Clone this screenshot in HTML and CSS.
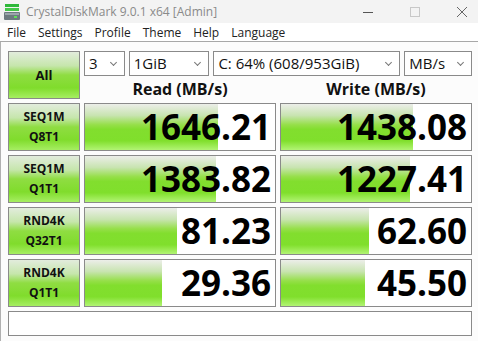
FILE: index.html
```html
<!DOCTYPE html>
<html lang="en">
<head>
  <meta charset="UTF-8">
  <title>CrystalDiskMark 9.0.1 x64 [Admin]</title>
  <link rel="stylesheet" href="styles.css">
</head>
<body>
  <div class="titlebar">
    <svg class="app-icon" width="16" height="16" viewBox="0 0 16 16">
      <rect x="1" y="0" width="14" height="3" fill="#2fb83a"/>
      <rect x="1" y="4" width="14" height="3" fill="#45c84a"/>
      <rect x="0" y="8" width="16" height="8" rx="1" fill="#6d7a80"/>
      <rect x="1" y="9" width="14" height="2" fill="#9aa6ab"/>
      <rect x="10" y="12" width="3" height="2" fill="#5ee05a"/>
    </svg>
    <span class="title">CrystalDiskMark 9.0.1 x64 [Admin]</span>
    <div class="controls">
      <svg width="12" height="12" viewBox="0 0 12 12"><path d="M1 6.5h10" stroke="#555" stroke-width="1"/></svg>
      <svg width="12" height="12" viewBox="0 0 12 12"><rect x="1.5" y="1.5" width="9" height="9" fill="none" stroke="#c8c8c8" stroke-width="1"/></svg>
      <svg width="12" height="12" viewBox="0 0 12 12"><path d="M1 1l10 10M11 1L1 11" stroke="#666" stroke-width="1"/></svg>
    </div>
  </div>

  <div class="menubar">
    <span>File</span>
    <span>Settings</span>
    <span>Profile</span>
    <span>Theme</span>
    <span>Help</span>
    <span>Language</span>
  </div>

  <div class="main">
    <div class="panel">
      <div class="btn all">All</div>

      <div class="combos">
        <div class="combo c-count">3</div>
        <div class="combo c-size">1GiB</div>
        <div class="combo c-drive">C: 64% (608/953GiB)</div>
        <div class="combo c-unit">MB/s</div>
      </div>

      <div class="head">Read (MB/s)</div>
      <div class="head">Write (MB/s)</div>

      <div class="btn">SEQ1M<br>Q8T1</div>
      <div class="cell"><div class="bar" style="width:70%"></div><span class="num">1646.21</span></div>
      <div class="cell"><div class="bar" style="width:69.5%"></div><span class="num">1438.08</span></div>

      <div class="btn">SEQ1M<br>Q1T1</div>
      <div class="cell"><div class="bar" style="width:69%"></div><span class="num">1383.82</span></div>
      <div class="cell"><div class="bar" style="width:68%"></div><span class="num">1227.41</span></div>

      <div class="btn">RND4K<br>Q32T1</div>
      <div class="cell"><div class="bar" style="width:48.4%"></div><span class="num">81.23</span></div>
      <div class="cell"><div class="bar" style="width:46.3%"></div><span class="num">62.60</span></div>

      <div class="btn">RND4K<br>Q1T1</div>
      <div class="cell"><div class="bar" style="width:40.5%"></div><span class="num">29.36</span></div>
      <div class="cell"><div class="bar" style="width:44.2%"></div><span class="num">45.50</span></div>

      <div class="status"></div>
    </div>
  </div>
</body>
</html>
```

FILE: styles.css
```css
html, body {
  margin: 0;
  padding: 0;
}
body {
  width: 478px;
  height: 341px;
  overflow: hidden;
  font-family: "Open Sans", "Noto Sans", sans-serif;
  background: #fcfcfc;
}

.titlebar {
  height: 23px;
  background: #f3f3f3;
  display: flex;
  align-items: center;
  padding-left: 4px;
}
.app-icon {
  flex: none;
}
.title {
  margin-left: 6px;
  font-size: 12px;
  color: #8a8a8a;
}
.controls {
  margin-left: auto;
  display: flex;
  gap: 35px;
  padding-right: 10px;
}

.menubar {
  height: 18px;
  background: #fff;
  border-bottom: 1px solid #a8a8a8;
  display: flex;
  align-items: center;
  font-size: 12px;
  color: #222;
  padding-left: 1px;
}
.menubar span {
  padding: 0 6px;
}

.main {
  border-left: 1px solid #b0b0b0;
  padding: 9px 0 0 7px;
  height: 290px;
}
.panel {
  display: grid;
  grid-template-columns: 72px 192px 192px;
  grid-template-rows: 25px 19px repeat(4, 48px) 25px;
  gap: 4px;
}

.btn {
  box-sizing: border-box;
  border: 1px solid #8a8a8a;
  background: linear-gradient(to bottom, #e2ecdc 0%, #c6e6ac 30%, #8fdd42 50%, #80dc2c 78%, #a6ee62 100%);
  display: flex;
  align-items: center;
  justify-content: center;
  text-align: center;
  font-weight: bold;
  font-size: 12px;
  line-height: 20px;
  color: #111;
}
.all {
  grid-row: 1 / 3;
  font-size: 13px;
}

.combos {
  grid-column: 2 / 4;
  display: flex;
  gap: 4px;
}
.combo {
  box-sizing: border-box;
  height: 25px;
  border: 1px solid #8a8a8a;
  background: #fff;
  font-size: 15px;
  line-height: 23px;
  padding-left: 4px;
  color: #111;
  position: relative;
}
.combo::after {
  content: "";
  position: absolute;
  right: 8px;
  top: 8px;
  width: 4px;
  height: 4px;
  border-right: 1px solid #777;
  border-bottom: 1px solid #777;
  transform: rotate(45deg);
}
.c-count { width: 41px; }
.c-size { width: 81px; }
.c-drive { width: 188px; }
.c-unit { width: 68px; }

.head {
  text-align: center;
  font-weight: bold;
  font-size: 16px;
  line-height: 19px;
  color: #111;
}

.cell {
  box-sizing: border-box;
  border: 1px solid #8a8a8a;
  background: #fff;
  display: grid;
}
.bar, .num {
  grid-area: 1 / 1;
}
.bar {
  background: linear-gradient(to bottom, #eceee9 0%, #c8e4b0 25%, #96df4a 45%, #82de2e 55%, #80df2c 80%, #b2f474 100%);
}
.num {
  justify-self: end;
  align-self: center;
  padding-right: 4px;
  font-weight: bold;
  font-size: 35px;
  line-height: 46px;
  color: #000;
}

.status {
  grid-column: 1 / 4;
  box-sizing: border-box;
  border: 1px solid #8a8a8a;
  background: #fff;
}
```
